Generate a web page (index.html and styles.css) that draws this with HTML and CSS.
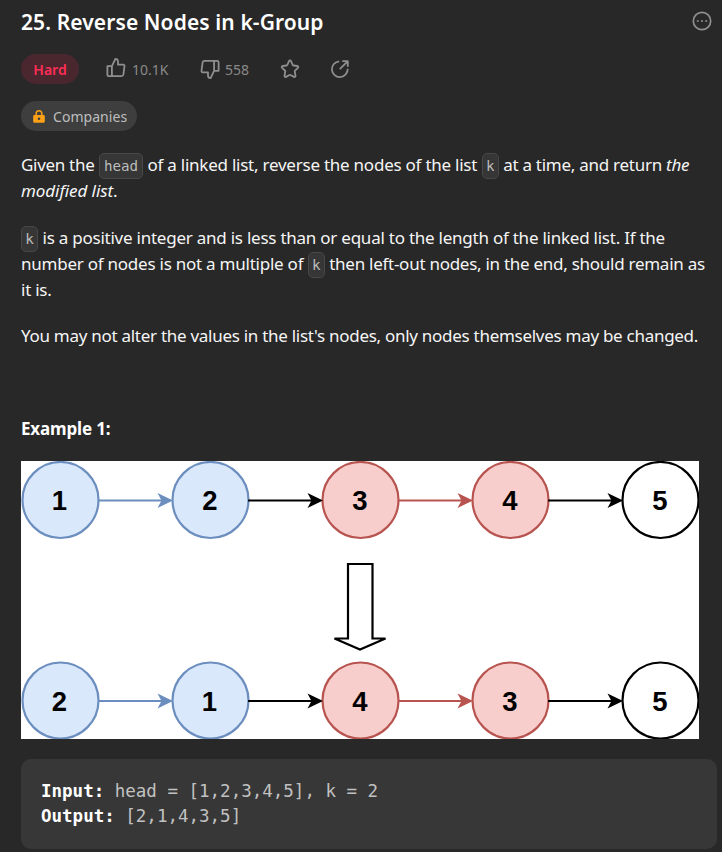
FILE: index.html
```html
<!DOCTYPE html>
<html lang="en">
<head>
<meta charset="utf-8">
<title>25. Reverse Nodes in k-Group</title>
<link rel="stylesheet" href="styles.css">
</head>
<body>
<main class="problem">
  <header class="head">
    <h1 class="title">25. Reverse Nodes in k-Group</h1>
    <svg class="more" viewBox="0 0 20 20"><circle cx="10" cy="10" r="8.700"/><path d="M4.800 10h2M9 10h2M13.200 10h2"/></svg>
  </header>
  <div class="stats">
    <span class="hard">Hard</span>
    <svg class="icon up" viewBox="0 0 20 20"><path d="M1.400 8.200h4.500v10H2.900a1.500 1.500 0 0 1-1.500-1.500zM5.900 8.200 9.400.9c1.500 0 2.600 1.100 2.600 2.600v3.200h5.200a1.300 1.300 0 0 1 1.300 1.500l-1.100 8.300a2 2 0 0 1-2 1.700H5.900"/></svg>
    <span class="count up-count">10.1K</span>
    <svg class="icon down" viewBox="0 0 20 20"><path d="M18.600 11.800h-4.500v-10h3a1.500 1.500 0 0 1 1.500 1.500zM14.100 11.800l-3.500 7.300c-1.500 0-2.600-1.100-2.600-2.600v-3.200H2.800a1.300 1.300 0 0 1-1.300-1.500l1.100-8.300a2 2 0 0 1 2-1.700h9.500"/></svg>
    <span class="count down-count">558</span>
    <svg class="icon star" viewBox="0 0 20 20"><path d="M10 1.500c.5 0 .8.300 1 .7l1.700 3.800c.1.300.4.500.7.500l3.900.5c1 .1 1.300 1.100.6 1.800l-2.900 2.800c-.2.200-.3.500-.3.800l.8 4.400c.2.900-.7 1.500-1.500 1.100L10.500 16a1 1 0 0 0-1 0L6 17.900c-.8.400-1.700-.2-1.500-1.100l.8-4.400c.1-.3 0-.6-.3-.8L2.100 8.800C1.400 8.100 1.700 7.100 2.700 7l3.900-.5c.3 0 .6-.2.700-.5L9 2.200c.2-.4.500-.7 1-.7z"/></svg>
    <svg class="icon share" viewBox="0 0 20 20"><path d="M9.200 2.300A7.900 7.900 0 1 0 17.700 9.800M9.800 10.200l7.500-7.500M12.300 2.200h5.500v5.500"/></svg>
  </div>
  <div class="companies">
    <svg class="lock" viewBox="0 0 12 13"><path class="body" d="M1.500 5h9A1.300 1.300 0 0 1 11.800 6.300v4.900a1.600 1.600 0 0 1-1.600 1.600H1.800A1.600 1.600 0 0 1 .2 11.200V6.300A1.300 1.300 0 0 1 1.500 5z"/><path class="shackle" d="M3.200 5.500V3.600a2.800 2.800 0 0 1 5.600 0v1.900"/><circle cx="6" cy="8.800" r="1.300"/></svg>
    <span>Companies</span>
  </div>

  <p class="p1"><span class="line"><span class="t1">Given the</span> <code>head</code> <span class="t2">of a linked list, reverse the nodes of the list</span> <code class="k">k</code> <span class="t3">at a time, and return <em>the</em></span></span>
  <span class="line"><span class="t4"><em>modified list</em>.</span></span></p>
  <p class="p2"><span class="line"><code class="k">k</code> <span class="t2">is a positive integer and is less than or equal to the length of the linked list. If the</span></span>
  <span class="line"><span class="t2">number of nodes is not a multiple of</span> <code class="k">k</code> <span class="t3">then left-out nodes, in the end, should remain as</span></span>
  <span class="line"><span class="t2">it is.</span></span></p>
  <p class="p3"><span class="line"><span class="t5">You may not alter the values in the list's nodes, only nodes themselves may be changed.</span></span></p>
  <p class="example"><strong>Example 1:</strong></p>

  <svg class="diagram" viewBox="0 0 678 278">
    <defs>
      <circle id="node" r="38"/>
      <g id="edge"><path class="shaft" d="M0 0H64"/><path class="tip" d="M75 0 59.500 7.500 63.500 0 59.500-7.500z"/></g>
    </defs>
    <g id="row1">
      <g class="blue"><use href="#node" x="39.500" y="39"/><use href="#node" x="189.500" y="39"/><use href="#edge" x="77" y="39.500"/></g>
      <g class="red"><use href="#node" x="339.500" y="39"/><use href="#node" x="489.500" y="39"/><use href="#edge" x="377" y="39.500"/></g>
      <g class="black"><use href="#node" x="639.500" y="39"/><use href="#edge" x="227" y="39.500"/><use href="#edge" x="527" y="39.500"/></g>
    </g>
    <use href="#row1" y="200.500"/>
    <g class="num">
      <text x="38.500" y="49">1</text><text x="188.800" y="49">2</text><text x="339" y="49">3</text><text x="489" y="49">4</text><text x="639" y="49">5</text>
      <text x="38.500" y="249.500">2</text><text x="188.500" y="249.500">1</text><text x="339" y="249.500">4</text><text x="489" y="249.500">3</text><text x="639" y="249.500">5</text>
    </g>
    <path class="big" d="M327 103h24.500v74.500h13L339 188.500 313.500 177.500H327z"/>
  </svg>

<pre class="io"><b>Input:</b> head = [1,2,3,4,5], k = 2
<b>Output:</b> [2,1,4,3,5]</pre>
</main>
</body>
</html>
```
FILE: styles.css
```css
* { box-sizing: border-box; }
body { margin: 0; width: 722px; height: 852px; overflow: hidden; background: #282828; color: #f5f5f5; font-family: "Noto Sans", sans-serif; }
.problem { padding: 0 5px 0 21px; }
.head { display: flex; justify-content: space-between; height: 54px; padding: 9px 5px 0 0; }
.title { margin: 0; color: #fff; font-size: 21px; font-weight: 600; line-height: 26px; letter-spacing: 0.100px; white-space: nowrap; }
.more { width: 20px; height: 20px; margin-top: 2px; fill: none; stroke: #8f8f8f; stroke-width: 1.700; }
.stats { display: flex; align-items: center; height: 30px; color: #8a8a8a; font-size: 14px; }
.hard { display: flex; align-items: center; justify-content: center; width: 58px; height: 30px; border-radius: 15px; background: #4a272f; color: #ff2d55; font-size: 14px; font-weight: 600; }
.icon { width: 20px; height: 20px; fill: none; stroke: #8f8f8f; stroke-width: 1.800; stroke-linejoin: round; }
.up { margin: 0 0 2px 26.500px; }
.count { width: 40px; margin-left: 6.500px; }
.down { margin-left: 27.500px; }
.down-count { width: 27px; margin-left: 5.500px; }
.star { margin-left: 28px; }
.share { margin-left: 30px; }
.companies { display: flex; align-items: center; width: 116px; height: 30px; margin-top: 17px; padding-left: 12px; border-radius: 15px; background: #3e3e3e; color: #bdbebe; font-size: 14px; letter-spacing: 0.050px; }
.lock { width: 12px; height: 13px; margin-right: 8px; }
.lock .body { fill: #ffa116; }
.lock .shackle { fill: none; stroke: #ffa116; stroke-width: 1.500; }
.lock circle { fill: #3e3e3e; }
p { margin: 0; font-size: 17px; line-height: 26px; }
.line { display: block; height: 26px; white-space: nowrap; }
.t1 { letter-spacing: -0.300px; }
.t2 { letter-spacing: -0.240px; }
.t3 { letter-spacing: -0.270px; }
.t4 { letter-spacing: -0.070px; }
.t5 { letter-spacing: -0.280px; }
.p1 { margin-top: 21px; }
.p2 { margin-top: 21px; }
.p3 { margin-top: 20px; }
.example { margin-top: 67px; color: #fff; letter-spacing: -0.150px; }
code { display: inline-block; height: 26px; margin: -5px 0; padding: 0 4px; border: 1px solid #484848; border-radius: 5px; background: #363636; color: #bcbcbc; font: 14.200px/24px "DejaVu Sans Mono", monospace; }
code.k { padding: 0 3.300px; }
.diagram { display: block; width: 678px; height: 278px; margin-top: 19px; background: #fff; }
.diagram circle, .shaft { stroke-width: 2.200; }
.blue { color: #6c8ebf; fill: #dae8fc; stroke: #6c8ebf; }
.red { color: #b85450; fill: #f8cecc; stroke: #b85450; }
.black { color: #000; fill: #fff; stroke: #000; }
.tip { fill: currentColor; stroke: none; }
.num text { font: bold 27.500px "Liberation Sans", sans-serif; text-anchor: middle; fill: #000; }
.big { fill: #fff; stroke: #000; stroke-width: 2.200; }
.io { height: 90px; margin: 20px 0 0; padding: 20px 20px 0; border-radius: 10px; background: #373737; color: #c1c1c1; font: 17.500px/25.400px "DejaVu Sans Mono", monospace; }
.io b { color: #fff; }
```
